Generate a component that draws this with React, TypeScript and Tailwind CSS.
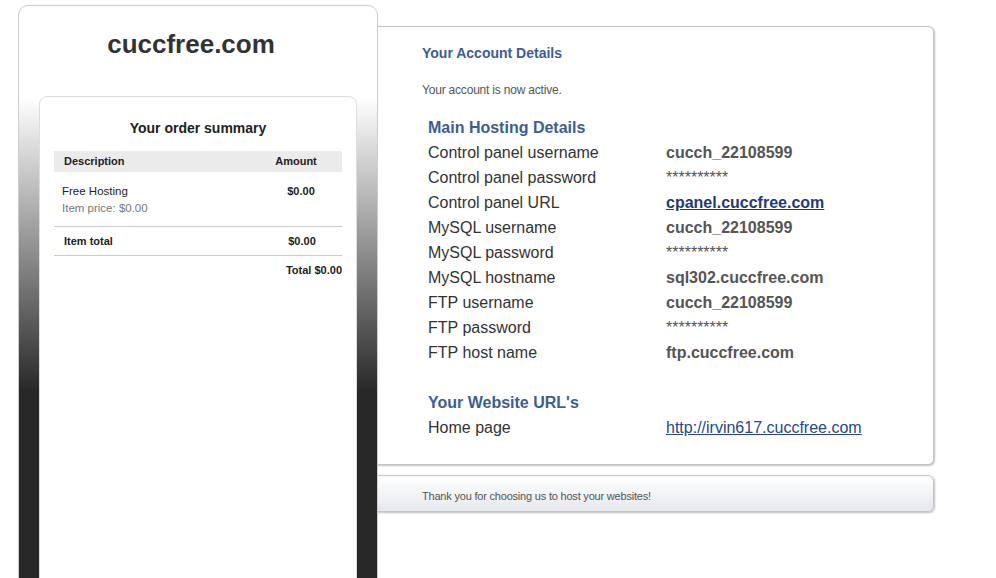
import React from "react";

const rows: { label: string; value: string; kind: "bold" | "pass" | "link" }[] = [
  { label: "Control panel username", value: "cucch_22108599", kind: "bold" },
  { label: "Control panel password", value: "**********", kind: "pass" },
  { label: "Control panel URL", value: "cpanel.cuccfree.com", kind: "link" },
  { label: "MySQL username", value: "cucch_22108599", kind: "bold" },
  { label: "MySQL password", value: "**********", kind: "pass" },
  { label: "MySQL hostname", value: "sql302.cuccfree.com", kind: "bold" },
  { label: "FTP username", value: "cucch_22108599", kind: "bold" },
  { label: "FTP password", value: "**********", kind: "pass" },
  { label: "FTP host name", value: "ftp.cuccfree.com", kind: "bold" },
];

export default function App() {
  return (
    <div className="w-[996px] h-[578px] overflow-hidden bg-white flex items-start font-['Liberation_Sans',Arial,sans-serif]">
      {/* Left panel */}
      <div className="relative z-10 ml-[18px] mt-[5px] w-[360px] h-[620px] shrink-0 border border-[#cccccc] rounded-t-[10px] bg-[linear-gradient(to_bottom,#ffffff_0px,#ffffff_92px,#282828_385px,#282828_100%)] flex flex-col">
        <div className="pt-[23px] pr-[14px] text-center text-[26px] leading-[30px] font-bold text-[#333333]">
          cuccfree.com
        </div>
        <div className="mt-[37px] mx-[20px] flex-1 bg-white border border-[#dddddd] rounded-[8px] px-[14px]">
          <div className="pt-[23px] text-center text-[14px] leading-[16px] font-bold text-[#222222]">
            Your order summary
          </div>
          <div className="mt-[15px] text-[11px] leading-[17px] text-[#222222]">
            <div className="grid grid-cols-[1fr_90px] bg-[#ebebeb] h-[21px] items-center font-bold">
              <div className="pl-[10px]">Description</div>
              <div className="text-center pr-[2px]">Amount</div>
            </div>
            <div className="grid grid-cols-[1fr_90px] pt-[11px] pb-[9px] border-b border-[#cccccc]">
              <div className="pl-[8px] text-[11.5px]">
                <div>Free Hosting</div>
                <div className="text-[#777777]">Item price: $0.00</div>
              </div>
              <div className="text-center font-bold pl-[8px]">$0.00</div>
            </div>
            <div className="grid grid-cols-[1fr_90px] h-[29px] items-center border-b border-[#cccccc] font-bold">
              <div className="pl-[10px]">Item total</div>
              <div className="text-center pl-[10px]">$0.00</div>
            </div>
            <div className="text-right font-bold pt-[6px]">Total $0.00</div>
          </div>
        </div>
      </div>

      {/* Right column */}
      <div className="ml-[-20px] w-[576px] shrink-0 pt-[26px] flex flex-col gap-[10px]">
        <div className="h-[439px] bg-white border border-[#c4c4c4] rounded-[6px] shadow-[1px_1px_2px_rgba(0,0,0,0.25)] pl-[63px] pt-[18px]">
          <div className="text-[14px] leading-[16px] font-bold text-[#3a5e96]">Your Account Details</div>
          <div className="mt-[22px] text-[12px] leading-[14px] text-[#555555] tracking-[-0.2px]">
            Your account is now active.
          </div>
          <div className="mt-[18px] pl-[6px] text-[16px] leading-[25px]">
            <div className="font-bold text-[#3a5e96]">Main Hosting Details</div>
            {rows.map((r) => (
              <div key={r.label} className="flex">
                <div className="w-[238px] text-[#333333]">{r.label}</div>
                {r.kind === "bold" && <div className="font-bold text-[#555555]">{r.value}</div>}
                {r.kind === "pass" && <div className="text-[#555555]">{r.value}</div>}
                {r.kind === "link" && (
                  <a href="#" className="font-bold text-[#1c3b7c] underline">
                    {r.value}
                  </a>
                )}
              </div>
            ))}
            <div className="h-[25px]" />
            <div className="font-bold text-[#3a5e96]">Your Website URL's</div>
            <div className="flex">
              <div className="w-[238px] text-[#333333]">Home page</div>
              <a href="#" className="text-[#26478a] underline">
                http://irvin617.cuccfree.com
              </a>
            </div>
          </div>
        </div>
        <div className="h-[37px] bg-[linear-gradient(to_bottom,#ffffff,#e5e8ec)] border border-[#c4c4c4] rounded-[6px] shadow-[1px_1px_2px_rgba(0,0,0,0.25)] pl-[63px] pt-[5px] flex items-center">
          <span className="text-[11px] text-[#555555] tracking-[-0.2px]">Thank you for choosing us to host your websites!</span>
        </div>
      </div>
    </div>
  );
}
